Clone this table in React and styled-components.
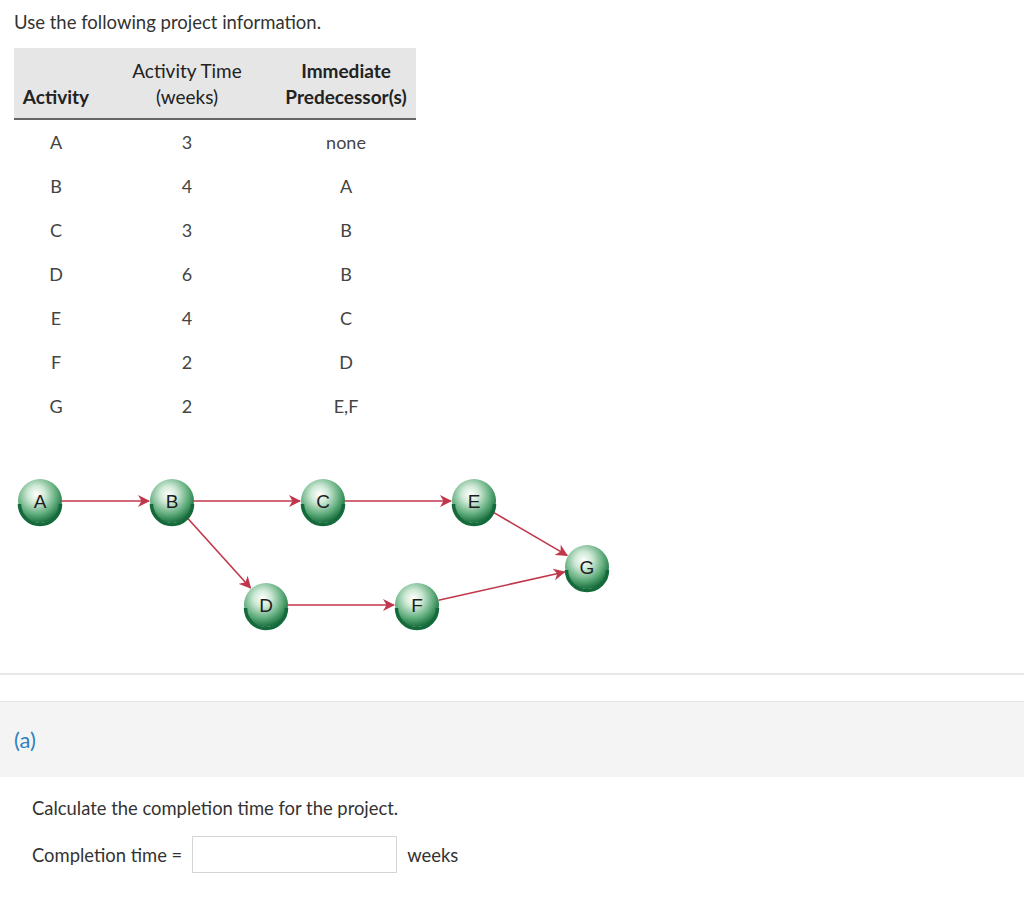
import React from 'react';
import styled, { createGlobalStyle } from 'styled-components';

const GlobalStyle = createGlobalStyle`
  body {
    margin: 0;
    background: #fff;
    font-family: Lato, "Open Sans", sans-serif;
    color: #333;
  }
`;

const Page = styled.div`
  width: 1024px;
  padding-top: 10px;
`;

const Intro = styled.div`
  padding: 0 14px;
`;

const Lead = styled.p`
  margin: 0 0 14px;
  font-size: 18.5px;
  line-height: 24px;
`;

const Table = styled.table`
  border-collapse: collapse;
  font-size: 18px;
`;

const Th = styled.th`
  background: #e6e6e6;
  width: ${(p) => p.$w}px;
  padding: 10px 8px 8px;
  font-size: 19px;
  font-weight: ${(p) => (p.$light ? 400 : 700)};
  line-height: 26px;
  vertical-align: bottom;
  text-align: center;
  color: #222;
  border-bottom: 2px solid #666;
  white-space: nowrap;
`;

const Td = styled.td`
  height: 44px;
  padding: 0;
  text-align: center;
  vertical-align: middle;
  color: #444;
  line-height: 20px;
`;

const Diagram = styled.svg`
  display: block;
  margin-top: 50px;
`;

const Divider = styled.hr`
  margin: 41px 0 26px;
  border: 0;
  border-top: 2px solid #e8e8e8;
`;

const PartBand = styled.div`
  background: #f4f4f4;
  border-top: 1px solid #e4e4e4;
  height: 75px;
  display: flex;
  align-items: center;
  padding: 0 14px;
  font-size: 22px;
  color: #2f7fbf;
`;

const Question = styled.div`
  padding: 19px 32px;
  font-size: 18.4px;
`;

const Prompt = styled.p`
  margin: 0 0 16px;
  line-height: 24px;
`;

const AnswerRow = styled.div`
  display: flex;
  align-items: center;
  gap: 10px;
`;

const AnswerBox = styled.input`
  width: 205px;
  height: 37px;
  box-sizing: border-box;
  border: 1px solid #d5d5d5;
  background: #fff;
`;

const rows = [
  ['A', '3', 'none'],
  ['B', '4', 'A'],
  ['C', '3', 'B'],
  ['D', '6', 'B'],
  ['E', '4', 'C'],
  ['F', '2', 'D'],
  ['G', '2', 'E,F'],
];

const nodes = {
  A: [26, 23],
  B: [158, 23],
  C: [309, 23],
  E: [460, 23],
  G: [573, 89],
  D: [252, 127],
  F: [403, 127],
};

const edges = [
  ['A', 'B'],
  ['B', 'C'],
  ['C', 'E'],
  ['B', 'D'],
  ['D', 'F'],
  ['E', 'G'],
  ['F', 'G'],
];

const R = 22;

function Network() {
  return (
    <Diagram width="610" height="154" viewBox="0 0 610 154">
      <defs>
        <radialGradient id="ball" cx="0.42" cy="0.35" r="0.65">
          <stop offset="0" stopColor="#ffffff" />
          <stop offset="0.3" stopColor="#cfe9d6" />
          <stop offset="0.72" stopColor="#5aa977" />
          <stop offset="1" stopColor="#1a6e3e" />
        </radialGradient>
        <marker id="head" markerWidth="12" markerHeight="12" refX="11" refY="6" orient="auto" markerUnits="userSpaceOnUse">
          <path d="M0 0 L12 6 L0 12 L3.5 6 Z" fill="#c0364a" />
        </marker>
      </defs>
      {edges.map(([a, b]) => {
        const [x1, y1] = nodes[a];
        const [x2, y2] = nodes[b];
        const len = Math.hypot(x2 - x1, y2 - y1);
        const ux = (x2 - x1) / len;
        const uy = (y2 - y1) / len;
        return (
          <line
            key={a + b}
            x1={x1 + ux * R}
            y1={y1 + uy * R}
            x2={x2 - ux * (R + 1)}
            y2={y2 - uy * (R + 1)}
            stroke="#c0364a"
            strokeWidth="1.6"
            markerEnd="url(#head)"
          />
        );
      })}
      {Object.entries(nodes).map(([k, [x, y]]) => (
        <g key={k}>
          <circle cx={x} cy={y} r={R} fill="url(#ball)" />
          <path
            d={`M${x - R + 1.5} ${y + 3} A${R - 1.5} ${R - 1.5} 0 0 0 ${x + R - 1.5} ${y + 3}`}
            fill="none"
            stroke="#146a3a"
            strokeWidth="3.5"
          />
          <text
            x={x}
            y={y + 7}
            textAnchor="middle"
            fontFamily="Liberation Sans, Arial, sans-serif"
            fontSize="19"
            fill="#1e1e1e"
          >
            {k}
          </text>
        </g>
      ))}
    </Diagram>
  );
}

export default function App() {
  return (
    <Page>
      <GlobalStyle />
      <Intro>
        <Lead>Use the following project information.</Lead>
        <Table>
          <thead>
            <tr>
              <Th $w={68}>Activity</Th>
              <Th $w={162} $light>
                Activity Time
                <br />
                (weeks)
              </Th>
              <Th $w={124}>
                Immediate
                <br />
                Predecessor(s)
              </Th>
            </tr>
          </thead>
          <tbody>
            {rows.map((r) => (
              <tr key={r[0]}>
                {r.map((c, i) => (
                  <Td key={i}>{c}</Td>
                ))}
              </tr>
            ))}
          </tbody>
        </Table>
        <Network />
      </Intro>
      <Divider />
      <PartBand>(a)</PartBand>
      <Question>
        <Prompt>Calculate the completion time for the project.</Prompt>
        <AnswerRow>
          <span>Completion time =</span>
          <AnswerBox type="text" />
          <span>weeks</span>
        </AnswerRow>
      </Question>
    </Page>
  );
}
